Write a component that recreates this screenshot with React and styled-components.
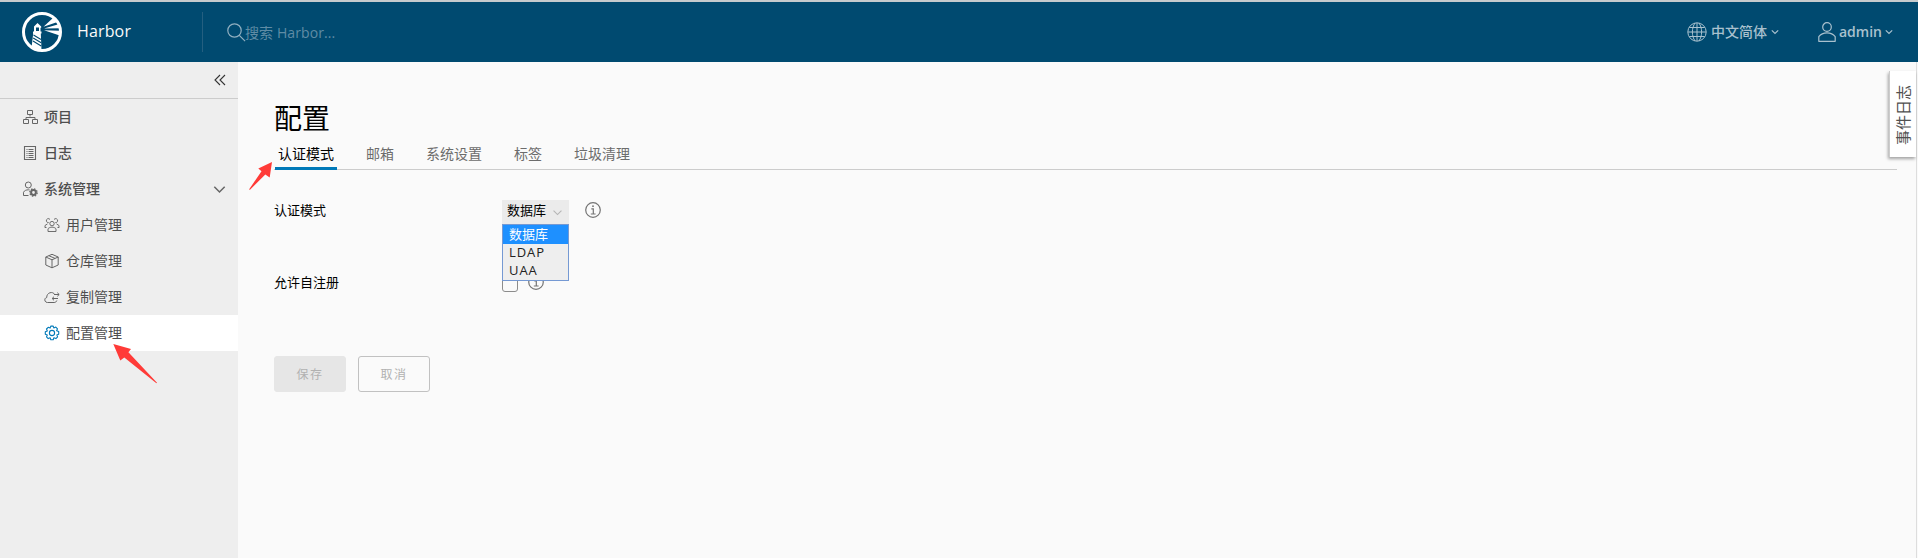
import React from 'react';
import styled, { createGlobalStyle } from 'styled-components';

const GlobalStyle = createGlobalStyle`
  * { box-sizing: border-box; }
  body { margin: 0; background: #fafafa; overflow: hidden; }
`;

const Page = styled.div`
  position: relative;
  width: 1918px;
  height: 558px;
  display: flex;
  flex-direction: column;
  overflow: hidden;
  background: #fafafa;
  color: #565656;
  font-family: 'Open Sans', 'Noto Sans CJK SC', sans-serif;
  font-size: 14px;
`;

const Header = styled.header`
  flex: none;
  height: 62px;
  padding-left: 22px;
  padding-right: 25px;
  display: flex;
  align-items: center;
  background: #004a70;
  border-top: 2px solid #c6cbcd;
`;

const Brand = styled.div`
  width: 180px;
  display: flex;
  align-items: center;
  gap: 15px;
  color: #fafafa;
  font-size: 16px;
  letter-spacing: 0.15px;
  span { padding-bottom: 2px; }
`;

const Search = styled.div`
  height: 40px;
  flex: 1;
  padding-left: 24px;
  display: flex;
  align-items: center;
  border-left: 1px solid #245f80;
  color: #5f8ca5;
  span { margin-left: -1px; letter-spacing: 0.1px; }
`;

const Account = styled.div`
  display: flex;
  align-items: center;
  gap: ${(p) => p.$gap}px;
  margin-left: ${(p) => p.$offset || 0}px;
  color: #a9c1ce;
  font-weight: ${(p) => p.$weight || 500};
  span { padding-bottom: 2px; }
`;

const Body = styled.div`
  flex: 1;
  display: flex;
  padding-right: 1px;
`;

const Sidebar = styled.nav`
  width: 238px;
  background: #eeeeee;
`;

const Collapse = styled.div`
  height: 37px;
  padding-right: 12px;
  display: flex;
  align-items: center;
  justify-content: flex-end;
  border-bottom: 1px solid #cccccc;
`;

const NavItem = styled.div`
  height: 36px;
  padding: 0 12px 0 ${(p) => (p.$nested ? 44 : 22)}px;
  display: flex;
  align-items: center;
  gap: 6px;
  background: ${(p) => (p.$active ? '#ffffff' : 'transparent')};
  color: #4e4e4e;
  font-weight: ${(p) => (p.$nested ? 400 : 500)};
  svg { color: ${(p) => (p.$active ? '#0079b8' : '#666')}; }
`;

const NavText = styled.span`
  flex: 1;
  line-height: 20px;
`;

const Main = styled.main`
  flex: 1;
  padding: 34px 19px 0 36px;
  border-right: 1px solid #dddddd;
`;

const Title = styled.h1`
  margin: 0;
  height: 43px;
  font-size: 28px;
  line-height: 44px;
  font-weight: 400;
  color: #000;
`;

const Tabs = styled.div`
  height: 31px;
  padding-left: 1px;
  display: flex;
  gap: 26px;
  box-shadow: inset 0 -1px 0 #cccccc;
`;

const Tab = styled.div`
  height: 31px;
  padding: 0 3px;
  line-height: 30px;
  color: ${(p) => (p.$active ? '#000' : '#6c6c6c')};
  box-shadow: ${(p) => (p.$active ? 'inset 0 -3px 0 #0079b8' : 'none')};
`;

const Form = styled.div`
  padding-top: 30px;
`;

const Field = styled.div`
  height: 72px;
  display: flex;
  align-items: flex-start;
  color: #000;
  font-size: 13px;
`;

const Label = styled.label`
  width: 228px;
  line-height: 21px;
`;

const SelectWrap = styled.div`
  position: relative;
  width: 67px;
  margin-right: 16px;
`;

const SelectBox = styled.div`
  height: 25px;
  padding: 0 7px 4px 5px;
  display: flex;
  align-items: center;
  justify-content: space-between;
  background: #ebebeb;
  line-height: 19px;
  svg { margin-top: 3px; }
`;

const Options = styled.div`
  position: absolute;
  top: 24px;
  left: 0;
  width: 67px;
  z-index: 2;
  background: #eeeeee;
  border: 1px solid #7599d3;
`;

const Option = styled.div`
  height: ${(p) => (p.$selected ? 19 : 18)}px;
  padding-left: 6px;
  line-height: ${(p) => (p.$selected ? 18 : 16)}px;
  background: ${(p) => (p.$selected ? '#1e90ff' : 'transparent')};
  color: ${(p) => (p.$selected ? '#fff' : '#222')};
  letter-spacing: ${(p) => (p.$selected ? 0 : 0.9)}px;
`;

const Checkbox = styled.span`
  width: 16px;
  height: 16px;
  margin: 4px 10px 0 0;
  border: 1px solid #8c8c8c;
  border-radius: 3px;
`;

const InfoSlot = styled.span`
  display: flex;
  padding-top: 2px;
`;

const Actions = styled.div`
  padding-top: 12px;
  display: flex;
  gap: 12px;
`;

const Button = styled.button`
  width: 72px;
  height: 36px;
  padding: 0;
  border: 1px solid ${(p) => (p.$solid ? '#e6e6e6' : '#c1c1c1')};
  border-radius: 3px;
  background: ${(p) => (p.$solid ? '#e6e6e6' : 'transparent')};
  color: #b1b1b1;
  font-family: inherit;
  font-size: 12px;
  letter-spacing: 1.5px;
`;

const EventTab = styled.div`
  position: absolute;
  top: 71px;
  left: 1889px;
  width: 27px;
  height: 86px;
  padding-top: 2px;
  display: flex;
  align-items: center;
  justify-content: center;
  background: #fff;
  border-left: 1px solid #ccc;
  box-shadow: -1px 2px 3px rgba(0, 0, 0, 0.35);
  span {
    writing-mode: vertical-rl;
    text-orientation: sideways;
    transform: rotate(180deg);
    font-family: 'Noto Sans CJK SC', sans-serif;
    font-size: 15px;
    font-weight: 400;
    line-height: 20px;
    color: #505050;
  }
`;

const Pointers = styled.svg`
  position: absolute;
  top: 0;
  left: 0;
  z-index: 3;
  pointer-events: none;
`;

const Glyph = styled.svg.attrs((p) => ({
  width: p.$w || 16,
  height: p.$h || p.$w || 16,
  fill: 'none',
  stroke: 'currentColor',
}))`
  flex: none;
  display: block;
`;

const Logo = () => (
  <svg width="40" height="40" viewBox="0 0 40 40">
    <circle cx="20" cy="20" r="18.5" fill="none" stroke="#fff" strokeWidth="3" />
    <path fill="#fff" d="M12 14.5 15.5 11l3.7 3.5v1.3h-.7v3.7h1v2h-.7l.7 16.5-3.5 1-6.5-3 1.7-14.5H11v-2h1v-3.7z" />
    <path fill="#004a70" d="M14 15.5h3V19h-3z" />
    <path stroke="#004a70" strokeWidth="1.1" d="m11.5 23 7.5 4.5M11.2 26l8 4.8M11 29l8.2 5" />
    <path fill="#fff" d="M21.5 14.8 31.5 5.5l4 4.5zM22 16.6l14.5-4.3 1 3.9zM22 18.2l15.5.6-.6 4.4z" />
  </svg>
);

const Caret = ({ w = 8, sw = 1 }) => (
  <Glyph $w={w} viewBox="0 0 8 8" strokeWidth={sw}><path d="m.8 2.3 3.2 3.2 3.2-3.2" /></Glyph>
);

const Info = () => (
  <Glyph $w={16} viewBox="0 0 16 16" color="#747474">
    <circle cx="8" cy="8" r="7.3" strokeWidth="1.2" />
    <path d="M6.3 6.8h2v5M5.8 12h4.8" strokeWidth="1.2" />
    <circle cx="8" cy="4.2" r=".9" fill="currentColor" stroke="none" />
  </Glyph>
);

const icons = {
  project: (
    <Glyph viewBox="0 0 16 16">
      <path d="M5.5 1.5h5v4h-5zM1.5 10.5h5v4h-5zM10.5 10.5h5v4h-5zM8 5.5v2M4 10.5v-2h9v2" />
    </Glyph>
  ),
  log: (
    <Glyph viewBox="0 0 16 16">
      <path d="M2.5 1.5h11v13h-11z" strokeWidth="1.1" />
      <path d="M4.5 4.5h1m1 0h5m-7 2h1m1 0h5m-7 2h1m1 0h5m-7 2h1m1 0h5m-7 2h1m1 0h5" />
    </Glyph>
  ),
  admin: (
    <Glyph viewBox="0 0 16 16">
      <circle cx="6.3" cy="4" r="3" />
      <path d="M6.5 14.5h-5v-3.2C2.4 9.5 4.2 8.8 6.5 8.8h1" />
      <circle cx="11.5" cy="11.5" r="2.4" strokeWidth="2" />
      <circle cx="11.5" cy="11.5" r="3.7" strokeDasharray="1.45 1.45" strokeWidth="1.3" />
    </Glyph>
  ),
  users: (
    <Glyph viewBox="0 0 16 16" strokeWidth=".95">
      <circle cx="8" cy="6.6" r="2.2" />
      <path d="M4 14.5v-2.7c1.8-2.2 6.2-2.2 8 0v2.7zM4.7 5.6A2 2 0 1 1 6 2.5M11.3 5.6A2 2 0 1 0 10 2.5M1 10.7V8.5l2.5-1.6M15 10.7V8.5l-2.5-1.6M1 10.5h1.5m12.5 0h-1.5" />
    </Glyph>
  ),
  box: (
    <Glyph viewBox="0 0 16 16">
      <path d="M8 1.3 14.2 4v8L8 14.8 1.8 12V4zM1.8 4 8 6.8 14.2 4M8 6.8v8M4.8 2.7 11 5.4" strokeLinejoin="round" />
    </Glyph>
  ),
  cloud: (
    <Glyph viewBox="0 0 16 16">
      <path d="M12.8 11.5c-.5 1.3-1.2 2-2.6 2H3.5C.2 13.5-.1 9 2.7 8.6 2.5 3.5 8.8 1.8 10.8 5.6M10 5.5h5M13.3 3.7l1.9 1.8-1.9 1.8M14 9.5H8.3M10 7.7 8.1 9.5l1.9 1.8" />
    </Glyph>
  ),
  gear: (
    <Glyph viewBox="0 0 16 16" strokeWidth="1.1">
      <circle cx="8" cy="8" r="2.6" />
      <path d="M6.8 1.1h2.4l.6 1.8 2-.8 1.7 1.7-.9 1.9 2.1.9v2.6l-1.9.7.8 2-1.7 1.7-2-.8-.7 2H6.8l-.7-2-1.9.8-1.7-1.7.8-1.9-2-.8V6.7l2-.8-.8-1.9 1.7-1.7 1.9.8z" strokeLinejoin="round" />
    </Glyph>
  ),
};

const topItems = [
  ['project', '项目'],
  ['log', '日志'],
];
const adminItems = [
  ['users', '用户管理'],
  ['box', '仓库管理'],
  ['cloud', '复制管理'],
  ['gear', '配置管理'],
];

export default function App() {
  return (
    <Page>
      <GlobalStyle />
      <Header>
        <Brand><Logo /><span>Harbor</span></Brand>
        <Search>
          <Glyph $w={19} viewBox="0 0 19 19" color="#91b0c1" strokeWidth="1.2">
            <circle cx="7.5" cy="7.5" r="6.7" /><path d="m12.3 12.3 5.8 5.8" />
          </Glyph>
          <span>搜索 Harbor...</span>
        </Search>
        <Account $gap={4}>
          <Glyph $w={20} viewBox="0 0 20 20" strokeWidth="1">
            <circle cx="10" cy="10" r="9.2" />
            <path d="M10 1v18M1 10h18M2.3 5.5h15.4M2.3 14.5h15.4M8 1C4.5 6 4.5 14 8 19M12 1c3.5 5 3.5 13 0 18" />
          </Glyph>
          <span>中文简体</span>
          <Caret sw={1.2} />
        </Account>
        <Account $gap={3} $offset={39} $weight={600}>
          <Glyph $w={18} $h={20} viewBox="0 0 18 20" strokeWidth="1.2">
            <circle cx="9" cy="5" r="4.3" />
            <path d="M.8 19.3v-4.6c3.8-5 12.6-5 16.4 0v4.6z" strokeLinejoin="round" />
          </Glyph>
          <span>admin</span>
          <Caret sw={1.2} />
        </Account>
      </Header>
      <Body>
        <Sidebar>
          <Collapse>
            <Glyph $w={12} viewBox="0 0 12 12" color="#333" strokeWidth="1.1">
              <path d="M6 1 1 6l5 5M11 1 6 6l5 5" />
            </Glyph>
          </Collapse>
          {topItems.map(([icon, text]) => (
            <NavItem key={icon}>{icons[icon]}<NavText>{text}</NavText></NavItem>
          ))}
          <NavItem>{icons.admin}<NavText>系统管理</NavText><Caret w={13} sw={0.95} /></NavItem>
          {adminItems.map(([icon, text]) => (
            <NavItem key={icon} $nested $active={icon === 'gear'}>{icons[icon]}<NavText>{text}</NavText></NavItem>
          ))}
        </Sidebar>
        <Main>
          <Title>配置</Title>
          <Tabs>
            {['认证模式', '邮箱', '系统设置', '标签', '垃圾清理'].map((t, i) => (
              <Tab key={t} $active={i === 0}>{t}</Tab>
            ))}
          </Tabs>
          <Form>
            <Field>
              <Label>认证模式</Label>
              <SelectWrap>
                <SelectBox>数据库<Glyph $w={9} viewBox="0 0 8 8" color="#b5b5b5"><path d="m.5 2.3 3.5 3.5 3.5-3.5" /></Glyph></SelectBox>
                <Options>
                  <Option $selected>数据库</Option>
                  <Option>LDAP</Option>
                  <Option>UAA</Option>
                </Options>
              </SelectWrap>
              <InfoSlot><Info /></InfoSlot>
            </Field>
            <Field>
              <Label>允许自注册</Label>
              <Checkbox />
              <InfoSlot><Info /></InfoSlot>
            </Field>
            <Actions>
              <Button $solid>保存</Button>
              <Button>取消</Button>
            </Actions>
          </Form>
        </Main>
      </Body>
      <EventTab><span>事件日志</span></EventTab>
      <Pointers width="300" height="400" viewBox="0 0 300 400" fill="#ff3b38">
        <path d="m272 162-13.7 6.5 3.2 2.7-12.5 18.3 1 .3 15.3-15.3 4.4 3z" />
        <path d="m113.3 344 17.7 5-2.6 3.2 28.6 30.6-.6.4-32.1-25.7-4 3z" />
      </Pointers>
    </Page>
  );
}
